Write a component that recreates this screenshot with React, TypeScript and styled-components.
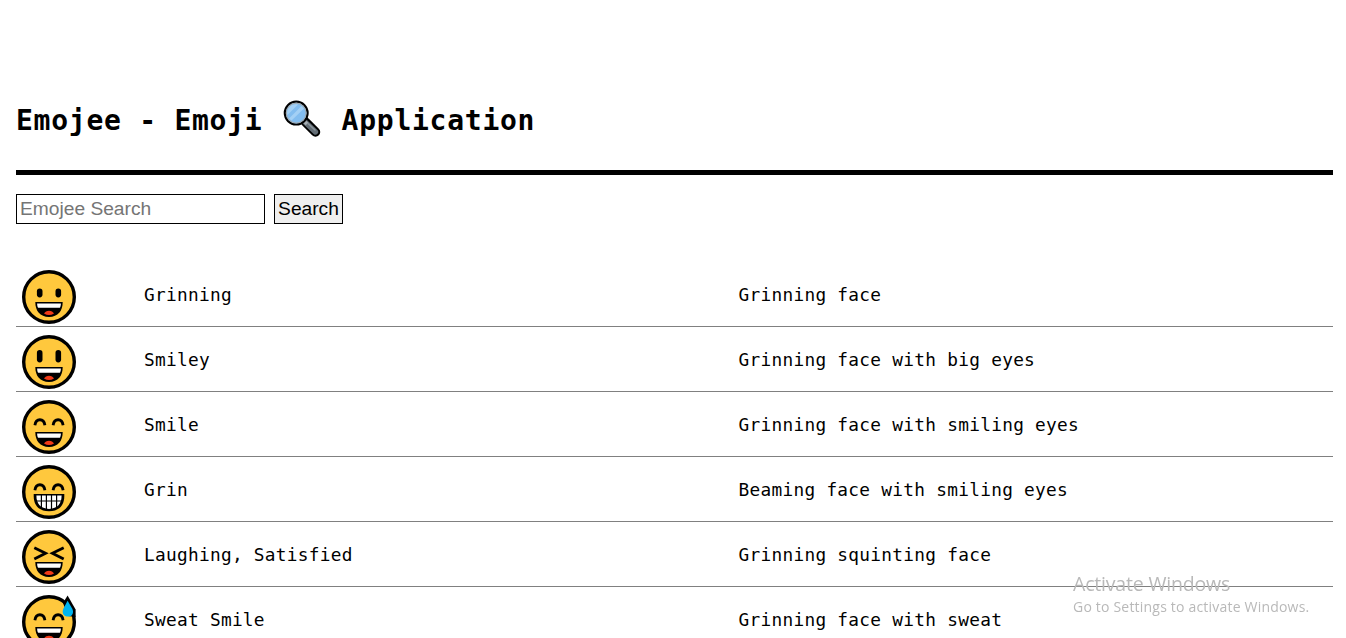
import React from "react";
import styled, { createGlobalStyle } from "styled-components";

const GlobalStyle = createGlobalStyle`
  html, body { margin: 0; background: #fff; overflow: hidden; }
  body { height: 638px; color: #000; font-family: "DejaVu Sans Mono", monospace; }
`;

const Page = styled.main`
  box-sizing: border-box;
  width: 1333px;
  padding: 96px 0 0 16px;
`;

const Title = styled.h1`
  display: flex;
  align-items: center;
  height: 48px;
  margin: 0;
  font-size: 28px;
  line-height: 48px;
  letter-spacing: 0.743px;
  white-space: pre;
`;

const TitleText = styled.span`
  padding-top: 2px;
`;

const Magnifier = styled.svg`
  width: 44px;
  height: 48px;
`;

const Rule = styled.hr`
  height: 5px;
  margin: 26px 0 19px;
  border: 0;
  background: #000;
`;

const SearchForm = styled.form`
  display: flex;
  gap: 9px;
  height: 30px;
  margin-bottom: 38px;
`;

const SearchInput = styled.input`
  box-sizing: border-box;
  width: 249px;
  padding: 0 3px;
  border: 1px solid #000;
  border-radius: 0;
  outline: 0;
  background: #fff;
  font: 19.2px "Liberation Sans", Arial, sans-serif;
  &::placeholder { color: #757575; opacity: 1; }
`;

const SearchButton = styled.button`
  box-sizing: border-box;
  width: 69px;
  padding: 0;
  border: 1px solid #000;
  border-radius: 0;
  background: #efefef;
  color: #000;
  font: 19.2px "Liberation Sans", Arial, sans-serif;
`;

const List = styled.ul`
  margin: 0;
  padding: 0;
  list-style: none;
`;

const Row = styled.li`
  box-sizing: border-box;
  display: grid;
  grid-template-columns: 128px 594.5px 1fr;
  align-items: center;
  height: 65px;
  border-bottom: 1px solid #808080;
`;

const Label = styled.span`
  padding-top: 2px;
  font-size: 17.8px;
  line-height: 24px;
  letter-spacing: 0.28px;
  white-space: nowrap;
`;

const Face = styled.svg`
  width: 54px;
  height: 54px;
  margin: 6px 0 0 6px;
  overflow: visible;
`;

const Watermark = styled.aside`
  position: fixed;
  left: 1073px;
  top: 573px;
  color: #b9b9b9;
  font-family: "Open Sans", "Noto Sans", sans-serif;
  white-space: nowrap;
`;

const WatermarkTitle = styled.div`
  font-size: 19.5px;
  line-height: 22px;
  letter-spacing: -0.19px;
`;

const WatermarkText = styled.div`
  margin-top: 2px;
  font-size: 14px;
  line-height: 20px;
  letter-spacing: 0.2px;
`;

type Mood = "grinning" | "smiley" | "smile" | "grin" | "laughing" | "sweat";

const emojis: { mood: Mood; name: string; description: string }[] = [
  { mood: "grinning", name: "Grinning", description: "Grinning face" },
  { mood: "smiley", name: "Smiley", description: "Grinning face with big eyes" },
  { mood: "smile", name: "Smile", description: "Grinning face with smiling eyes" },
  { mood: "grin", name: "Grin", description: "Beaming face with smiling eyes" },
  { mood: "laughing", name: "Laughing, Satisfied", description: "Grinning squinting face" },
  { mood: "sweat", name: "Sweat Smile", description: "Grinning face with sweat" },
];

function Eyes({ mood }: { mood: Mood }) {
  if (mood === "grinning" || mood === "smiley") {
    const half = mood === "grinning" ? 4.4 : 6.2;
    const y = mood === "grinning" ? 23 : 21.2;
    return (
      <>
        <rect x="14.9" y={y - half} width="5.6" height={half * 2} rx="2.8" />
        <rect x="33.5" y={y - half} width="5.6" height={half * 2} rx="2.8" />
      </>
    );
  }
  const d =
    mood === "laughing"
      ? "M12.3 17.7 L23.6 23.3 L12.3 29 M41.7 17.7 L30.4 23.3 L41.7 29"
      : "M12.9 25.2 C13.9 17.9 21.9 17.9 22.9 25.2 M31.1 25.2 C32.1 17.9 40.1 17.9 41.1 25.2";
  return <path d={d} fill="none" stroke="#000" strokeWidth="2.8" />;
}

function Mouth({ mood }: { mood: Mood }) {
  if (mood === "grin") {
    return (
      <>
        <path d="M11.7 29 H42.3 V31 C42.3 40.5 37 46.2 27 46.2 C17 46.2 11.7 40.5 11.7 31Z" />
        <path d="M14.4 30.6 H39.6 C39.6 38.7 35.5 43.9 27 43.9 C18.5 43.9 14.4 38.7 14.4 30.6Z" fill="#fff" />
        <path d="M14 36 H40 M19.4 30 V42 M24.4 30 V44 M29.5 30 V44 M34.6 30 V42" stroke="#000" strokeWidth="1.2" />
      </>
    );
  }
  return (
    <>
      <path d="M13.3 32 H40.7 C40.7 41 36 46.9 27 46.9 C18 46.9 13.3 41 13.3 32Z" />
      <path d="M15.1 33.6 H38.9 C38.8 35.5 38.3 37.6 37.8 37.7 H16.2 C15.6 37.6 15.2 35.5 15.1 33.6Z" fill="#fff" />
      <path d="M22 43.6 C23.6 39.7 30.4 39.7 32 43.6 Q27 46.6 22 43.6Z" fill="#f03a17" />
    </>
  );
}

function EmojiFace({ mood }: { mood: Mood }) {
  return (
    <Face viewBox="0 0 54 54">
      <circle cx="27" cy="27" r="25.3" fill="#ffc83d" stroke="#000" strokeWidth="3.4" />
      <Eyes mood={mood} />
      <Mouth mood={mood} />
      {mood === "sweat" && (
        <>
          <path d="M45.6 0.4 L41 8 L46 21 L53.6 22 V14.5Z" />
          <path
            d="M45.6 5.8 L41.6 13.2 C39.2 17.8 41.8 21.6 46 21.6 C50.4 21.6 52.4 17.6 50 13.2Z"
            fill="#00b4f0"
          />
        </>
      )}
    </Face>
  );
}

export default function App() {
  return (
    <>
      <GlobalStyle />
      <Page>
        <Title>
          <TitleText>{"Emojee - Emoji "}</TitleText>
          <Magnifier viewBox="0 0 44 48">
            <path d="M25.5 26 L35.5 36" stroke="#000" strokeWidth="9.5" strokeLinecap="round" />
            <path d="M24 25 L35.5 36" stroke="#636d75" strokeWidth="5.4" strokeLinecap="round" />
            <path d="M23 24 L27 28" stroke="#a6adb2" strokeWidth="3.8" />
            <path d="M28 27.5 L35 34" stroke="#89939b" strokeWidth="1.5" strokeLinecap="round" />
            <circle cx="16.2" cy="17.1" r="11.4" fill="#83bdef" stroke="#000" strokeWidth="2.2" />
            <circle cx="16.2" cy="17.1" r="9.9" fill="none" stroke="#9ea8af" strokeWidth="1.2" />
            <path d="M7.4 19 L18 8.4 C11 7 6 12.5 7.4 19Z M9 22.4 L21.5 10 L24 12.4 L11.5 24.4Z" fill="#a3d0f5" />
          </Magnifier>
          <TitleText>{" Application"}</TitleText>
        </Title>
        <Rule />
        <SearchForm onSubmit={(event) => event.preventDefault()}>
          <SearchInput placeholder="Emojee Search" />
          <SearchButton type="submit">Search</SearchButton>
        </SearchForm>
        <List>
          {emojis.map((emoji) => (
            <Row key={emoji.mood}>
              <EmojiFace mood={emoji.mood} />
              <Label>{emoji.name}</Label>
              <Label>{emoji.description}</Label>
            </Row>
          ))}
        </List>
      </Page>
      <Watermark>
        <WatermarkTitle>Activate Windows</WatermarkTitle>
        <WatermarkText>Go to Settings to activate Windows.</WatermarkText>
      </Watermark>
    </>
  );
}
